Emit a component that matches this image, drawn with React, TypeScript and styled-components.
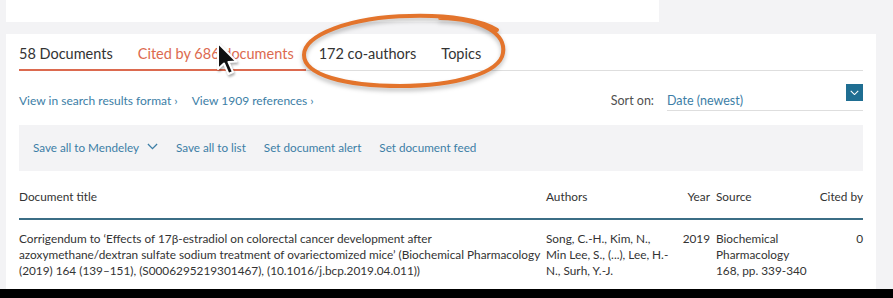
import React from "react";
import styled, { createGlobalStyle } from "styled-components";

const palette = {
  page: "#f3f3f5",
  white: "#ffffff",
  text: "#333333",
  muted: "#505050",
  link: "#3c7ea6",
  red: "#dc6a4f",
  line: "#dedede",
  navy: "#3b6d85",
  button: "#1f6e92",
  toolbar: "#f3f3f5",
  marker: "#e3742c",
};

const GlobalStyle = createGlobalStyle`
  html, body {
    margin: 0;
    padding: 0;
    background: ${palette.page};
  }
  body {
    font-family: Lato, "Open Sans", "Liberation Sans", sans-serif;
    color: ${palette.text};
  }
  * {
    box-sizing: border-box;
  }
`;

const Page = styled.div`
  position: relative;
  width: 893px;
  height: 298px;
  overflow: hidden;
  display: flex;
  flex-direction: column;
`;

const TopCard = styled.div`
  margin-left: 6px;
  width: 653px;
  height: 22px;
  background: ${palette.white};
`;

const Panel = styled.div`
  margin: 12px 0 0 6px;
  width: 870px;
  height: 255px;
  padding: 0 13px;
  background: ${palette.white};
  overflow: hidden;
`;

const BlackBar = styled.div`
  flex: 1;
  background: #000;
`;

const TabBar = styled.div`
  display: flex;
  border-bottom: 1px solid ${palette.line};
`;

const Tab = styled.div<{ $active?: boolean; $underlined?: boolean }>`
  padding: 10px 12.5px 5px;
  margin-bottom: -1px;
  font-size: 14.5px;
  line-height: 20px;
  color: ${(props) => (props.$active ? palette.red : palette.text)};
  border-bottom: 2px solid
    ${(props) => (props.$underlined ? palette.red : "transparent")};
  &:first-child {
    padding-left: 0;
  }
`;

const LinksRow = styled.div`
  display: flex;
  align-items: flex-start;
  height: 54px;
  padding-top: 13px;
`;

const LinkGroup = styled.div`
  display: flex;
  gap: 14px;
  padding-top: 9px;
  flex: 1;
`;

const Link = styled.span`
  font-size: 12px;
  line-height: 16px;
  color: ${palette.link};
`;

const SortLabel = styled.span`
  font-size: 12.5px;
  line-height: 16px;
  color: ${palette.muted};
  margin-right: 13px;
  padding-top: 9px;
`;

const Select = styled.div`
  display: flex;
  justify-content: space-between;
  align-items: flex-start;
  width: 196px;
  height: 27px;
  border-bottom: 1px solid ${palette.line};
`;

const SelectValue = styled.span`
  font-size: 12.5px;
  line-height: 16px;
  color: ${palette.link};
  padding-top: 9px;
`;

const SelectButton = styled.div`
  width: 17px;
  height: 17px;
  background: ${palette.button};
  display: flex;
  align-items: center;
  justify-content: center;
`;

const Toolbar = styled.div`
  display: flex;
  align-items: center;
  gap: 18px;
  height: 46px;
  padding: 0 14px 3px;
  background: ${palette.toolbar};
`;

const ToolbarItem = styled.span`
  display: flex;
  align-items: center;
  gap: 8px;
  font-size: 11.7px;
  color: ${palette.link};
`;

const Row = styled.div<{ $head?: boolean }>`
  display: grid;
  grid-template-columns: 527px 130px 34px 1fr 50px;
  font-size: 11.8px;
  line-height: 16px;
  color: ${palette.text};
  padding: ${(props) => (props.$head ? "18px 0 13px" : "11px 0 0")};
  border-bottom: ${(props) =>
    props.$head ? `2px solid ${palette.navy}` : "none"};
`;

const Cell = styled.div<{ $align?: "left" | "right"; $indent?: boolean; $nowrap?: boolean }>`
  text-align: ${(props) => props.$align || "left"};
  padding-left: ${(props) => (props.$indent ? "6px" : "0")};
  padding-right: ${(props) => (props.$align === "right" ? "0" : "4px")};
  white-space: ${(props) => (props.$nowrap ? "nowrap" : "normal")};
`;

const Marker = styled.svg`
  position: absolute;
  left: 290px;
  top: 5px;
  overflow: visible;
  filter: drop-shadow(0 3px 2px rgba(0, 0, 0, 0.25));
`;

const Cursor = styled.svg`
  position: absolute;
  left: 216px;
  top: 41px;
  filter: drop-shadow(1px 2px 1px rgba(0, 0, 0, 0.3));
`;

const Chevron = ({ color, size }: { color: string; size: number }) => (
  <svg width={size} height={size * 0.6} viewBox="0 0 12 7">
    <polyline
      points="1,1 6,6 11,1"
      fill="none"
      stroke={color}
      strokeWidth="1.4"
    />
  </svg>
);

const tabs = [
  { label: "58 Documents", underlined: true },
  { label: "Cited by 686 documents", active: true, underlined: true },
  { label: "172 co-authors" },
  { label: "Topics" },
];

const tools = ["Save all to list", "Set document alert", "Set document feed"];

const App = () => {
  return (
    <Page>
      <GlobalStyle />
      <TopCard />
      <Panel>
        <TabBar>
          {tabs.map((tab) => (
            <Tab key={tab.label} $active={tab.active} $underlined={tab.underlined}>
              {tab.label}
            </Tab>
          ))}
        </TabBar>
        <LinksRow>
          <LinkGroup>
            <Link>View in search results format ›</Link>
            <Link>View 1909 references ›</Link>
          </LinkGroup>
          <SortLabel>Sort on:</SortLabel>
          <Select>
            <SelectValue>Date (newest)</SelectValue>
            <SelectButton>
              <Chevron color="#ffffff" size={9} />
            </SelectButton>
          </Select>
        </LinksRow>
        <Toolbar>
          <ToolbarItem>
            Save all to Mendeley
            <Chevron color={palette.link} size={11} />
          </ToolbarItem>
          {tools.map((tool) => (
            <ToolbarItem key={tool}>{tool}</ToolbarItem>
          ))}
        </Toolbar>
        <Row $head>
          <Cell>Document title</Cell>
          <Cell>Authors</Cell>
          <Cell $align="right">Year</Cell>
          <Cell $indent>Source</Cell>
          <Cell $align="right" $nowrap>Cited by</Cell>
        </Row>
        <Row>
          <Cell>
            Corrigendum to ‘Effects of 17β-estradiol on colorectal cancer
            development after azoxymethane/dextran sulfate sodium treatment of
            ovariectomized mice’ (Biochemical Pharmacology (2019) 164
            (139–151), (S0006295219301467), (10.1016/j.bcp.2019.04.011))
          </Cell>
          <Cell>Song, C.-H., Kim, N., Min Lee, S., (...), Lee, H.-N., Surh, Y.-J.</Cell>
          <Cell $align="right">2019</Cell>
          <Cell $indent $nowrap>
            Biochemical
            <br />
            Pharmacology
            <br />
            168, pp. 339-340
          </Cell>
          <Cell $align="right">0</Cell>
        </Row>
      </Panel>
      <BlackBar />

      <Marker width="225" height="95" viewBox="0 0 225 95">
        <path
          d="M150 13 C 195 14, 216 30, 213 48 C 210 68, 165 81, 110 81 C 55 81, 14 70, 14 50 C 14 30, 60 12, 120 11 C 160 10, 192 15, 207 25"
          fill="none"
          stroke={palette.marker}
          strokeWidth="4"
          strokeLinecap="round"
        />
      </Marker>

      <Cursor width="24" height="36" viewBox="0 0 24 36">
        <path
          d="M2 2 L2 28 L8 22.5 L12.5 33 L17 31 L12.5 21 L20.5 20.5 Z"
          fill="#111"
          stroke="#fff"
          strokeWidth="2"
          strokeLinejoin="round"
        />
      </Cursor>
    </Page>
  );
};

export default App;
